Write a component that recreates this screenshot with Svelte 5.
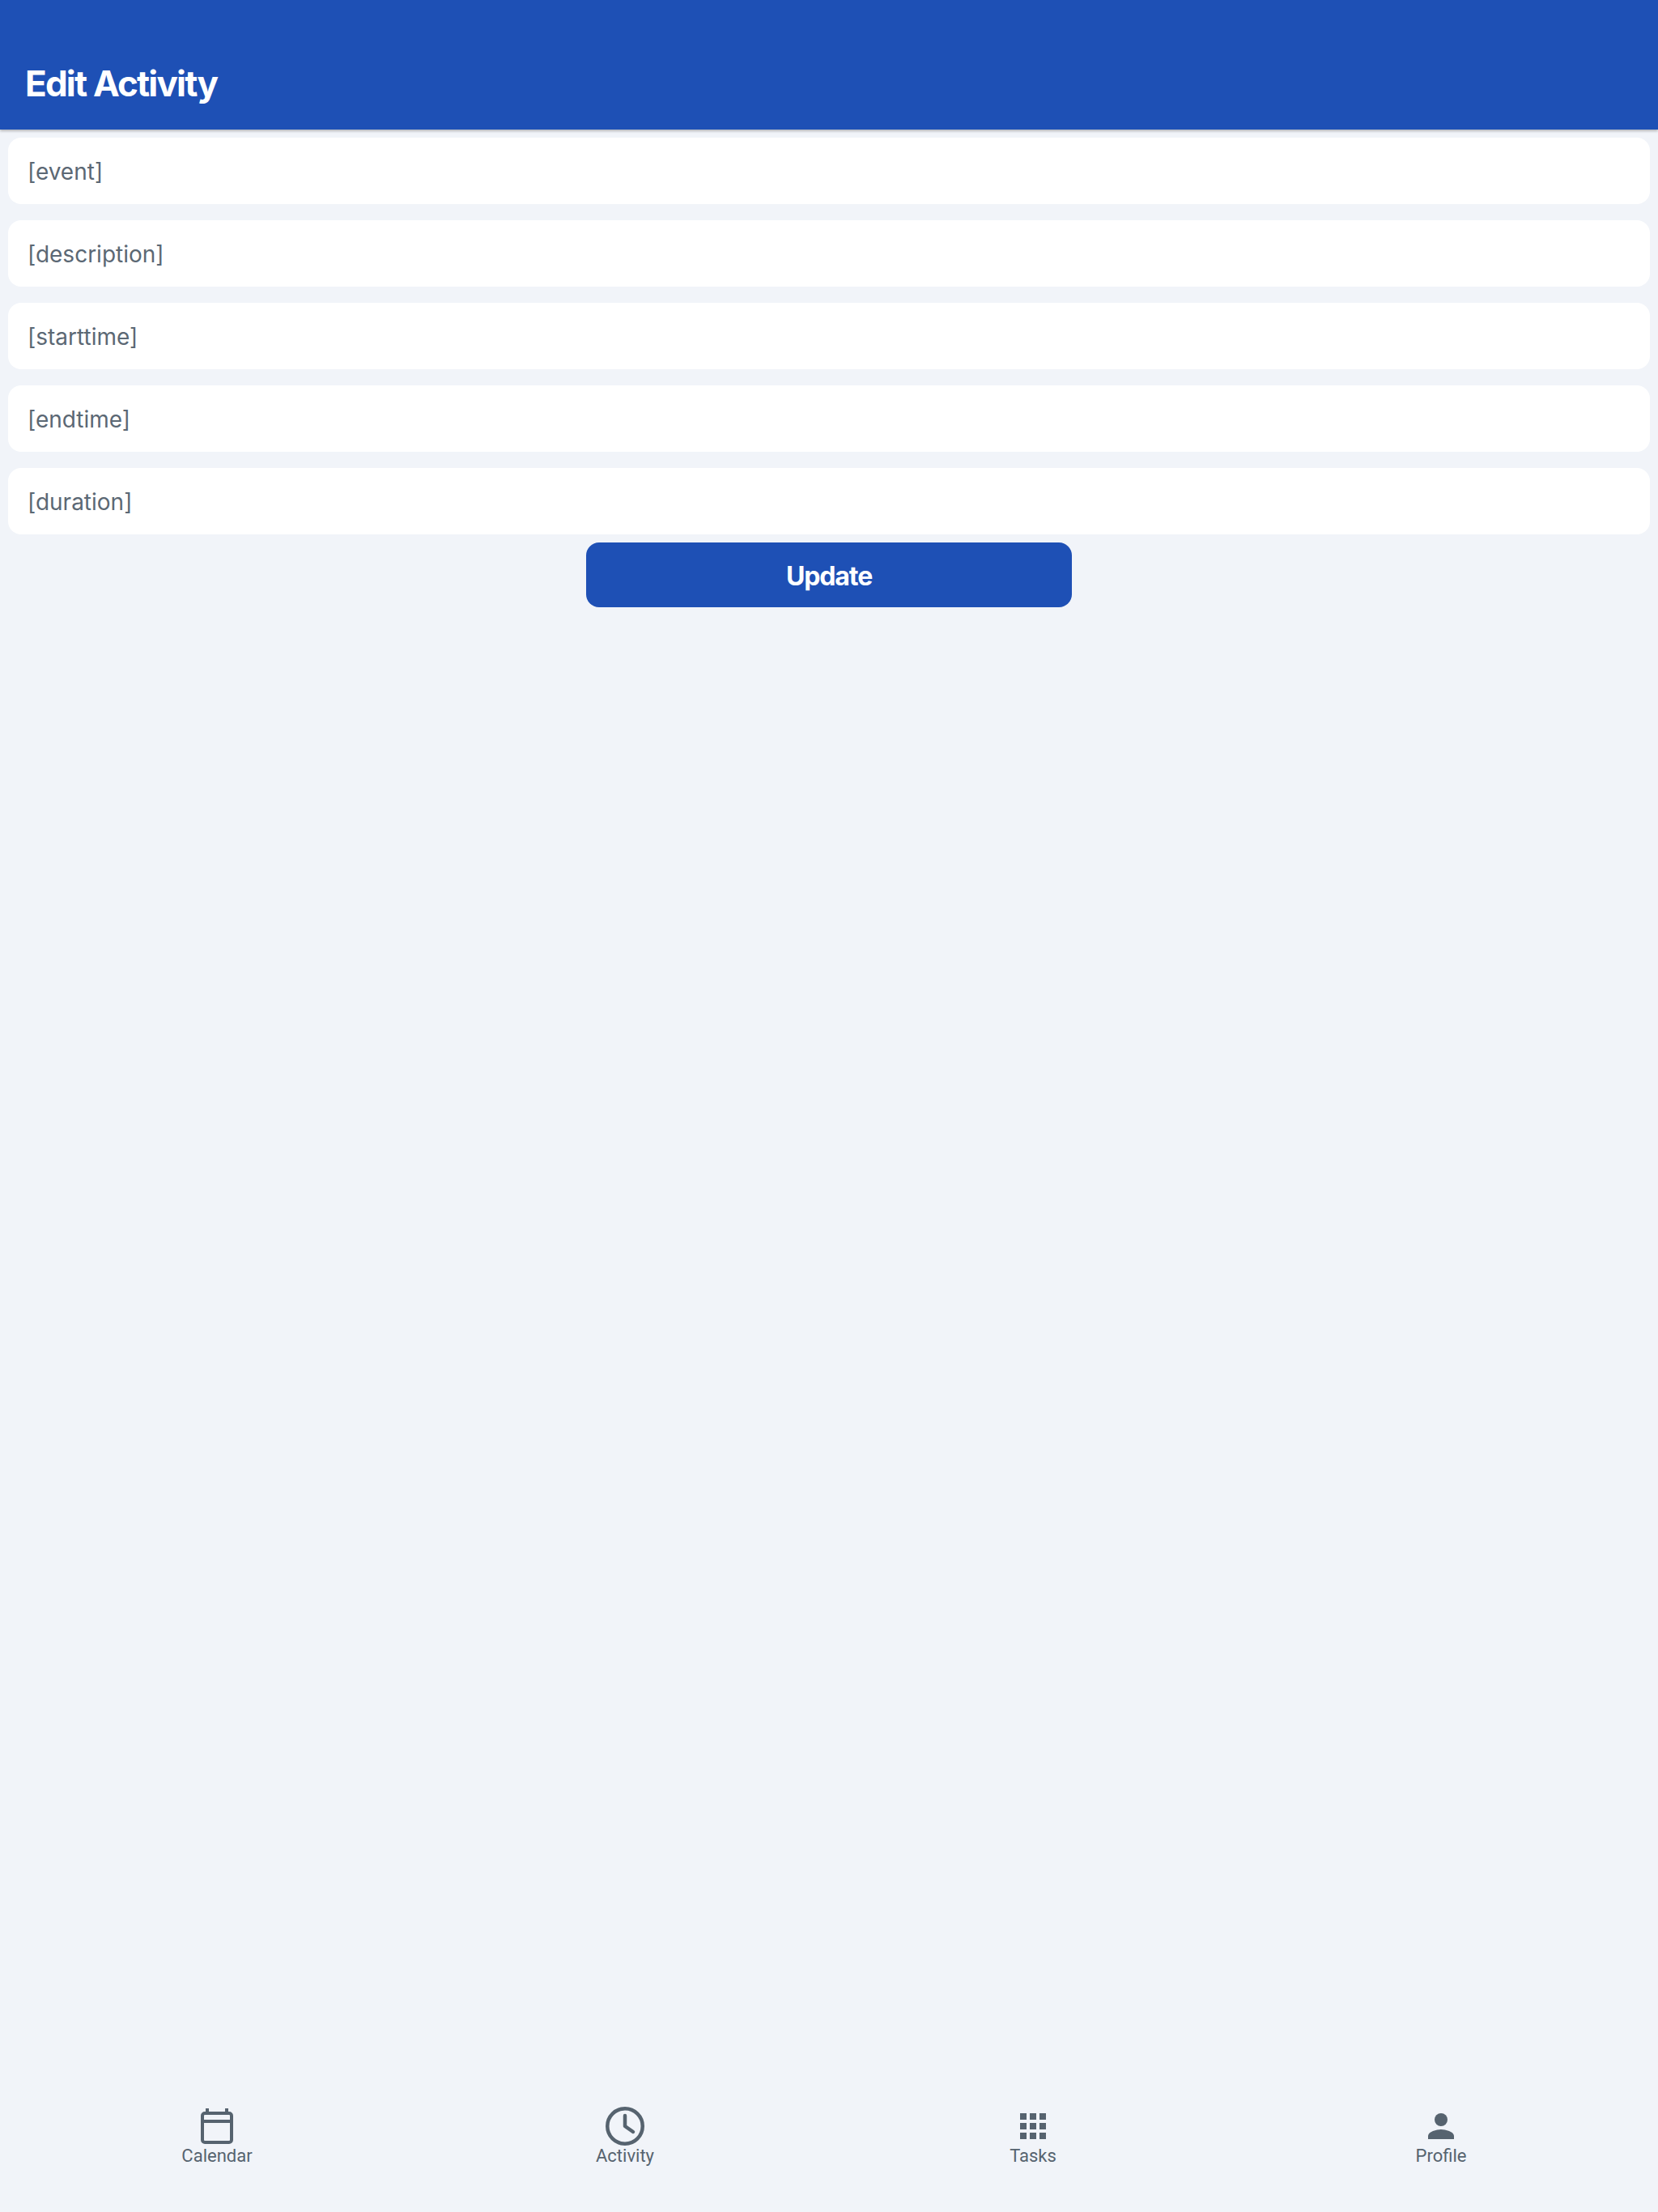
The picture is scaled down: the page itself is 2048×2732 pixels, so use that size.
<script>
    const fields = ["[event]", "[description]", "[starttime]", "[endtime]", "[duration]"];
</script>

<div class="page">
    <header class="topbar">
        <h1>Edit Activity</h1>
    </header>

    <main class="form">
        {#each fields as field}
            <div class="field">{field}</div>
        {/each}
        <button class="update">Update</button>
    </main>

    <nav class="tabs">
        <div class="tab">
            <svg viewBox="0 0 48 48" fill="none" stroke="currentColor" stroke-width="4">
                <rect x="6" y="8" width="36" height="36" rx="3" />
                <path d="M6 18H42M12 2V8M36 2V8" />
            </svg>
            <span>Calendar</span>
        </div>
        <div class="tab">
            <svg viewBox="0 0 48 48" fill="none" stroke="currentColor" stroke-width="4.5">
                <circle cx="24" cy="24" r="21.75" />
                <path d="M24 11V24L34 31" stroke-linecap="round" stroke-linejoin="round" />
            </svg>
            <span>Activity</span>
        </div>
        <div class="tab">
            <svg viewBox="0 0 48 48" fill="currentColor">
                <path d="M8 8h8v8H8zM20 8h8v8h-8zM32 8h8v8h-8zM8 20h8v8H8zM20 20h8v8h-8zM32 20h8v8h-8zM8 32h8v8H8zM20 32h8v8h-8zM32 32h8v8h-8z" />
            </svg>
            <span>Tasks</span>
        </div>
        <div class="tab">
            <svg viewBox="0 0 48 48" fill="currentColor">
                <circle cx="24" cy="16" r="8" />
                <path d="M8 40v-4c0-5.3 10.7-8 16-8s16 2.7 16 8v4z" />
            </svg>
            <span>Profile</span>
        </div>
    </nav>
</div>

<style>
    :global(body) {
        margin: 0;
        background: #f1f4f9;
    }
    .page {
        min-height: 100vh;
        display: flex;
        flex-direction: column;
        font-family: Inter, "Liberation Sans", sans-serif;
    }
    .topbar {
        height: 160px;
        box-sizing: border-box;
        background: #1e50b5;
        box-shadow: 0 2px 3px rgba(0, 0, 0, 0.25);
        padding: 0 31px;
        display: flex;
        align-items: flex-end;
    }
    h1 {
        margin: 0 0 32px;
        color: #fff;
        font-size: 44px;
        line-height: 50px;
        font-weight: 650;
        letter-spacing: -1.8px;
    }
    .form {
        padding: 10px 10px 0;
        display: flex;
        flex-direction: column;
        align-items: center;
    }
    .field {
        width: 100%;
        height: 82px;
        box-sizing: border-box;
        margin-bottom: 20px;
        padding: 2px 24px 0;
        display: flex;
        align-items: center;
        background: #fff;
        border-radius: 16px;
        color: #5b6874;
        font-size: 28px;
    }
    .field:last-of-type {
        margin-bottom: 10px;
    }
    .update {
        width: 600px;
        height: 80px;
        padding: 2px 0 0;
        border: 0;
        border-radius: 16px;
        background: #1e50b5;
        color: #fff;
        font-family: inherit;
        font-size: 32px;
        font-weight: 650;
        letter-spacing: -1.1px;
    }
    .tabs {
        margin-top: auto;
        padding: 0 16px;
        height: 130px;
        display: grid;
        grid-template-columns: repeat(4, 1fr);
    }
    .tab {
        display: flex;
        flex-direction: column;
        align-items: center;
        color: #56636f;
    }
    .tab svg {
        width: 48px;
        height: 48px;
        display: block;
    }
    .tab span {
        font-family: Roboto, sans-serif;
        font-size: 22px;
        line-height: 26px;
    }
</style>
